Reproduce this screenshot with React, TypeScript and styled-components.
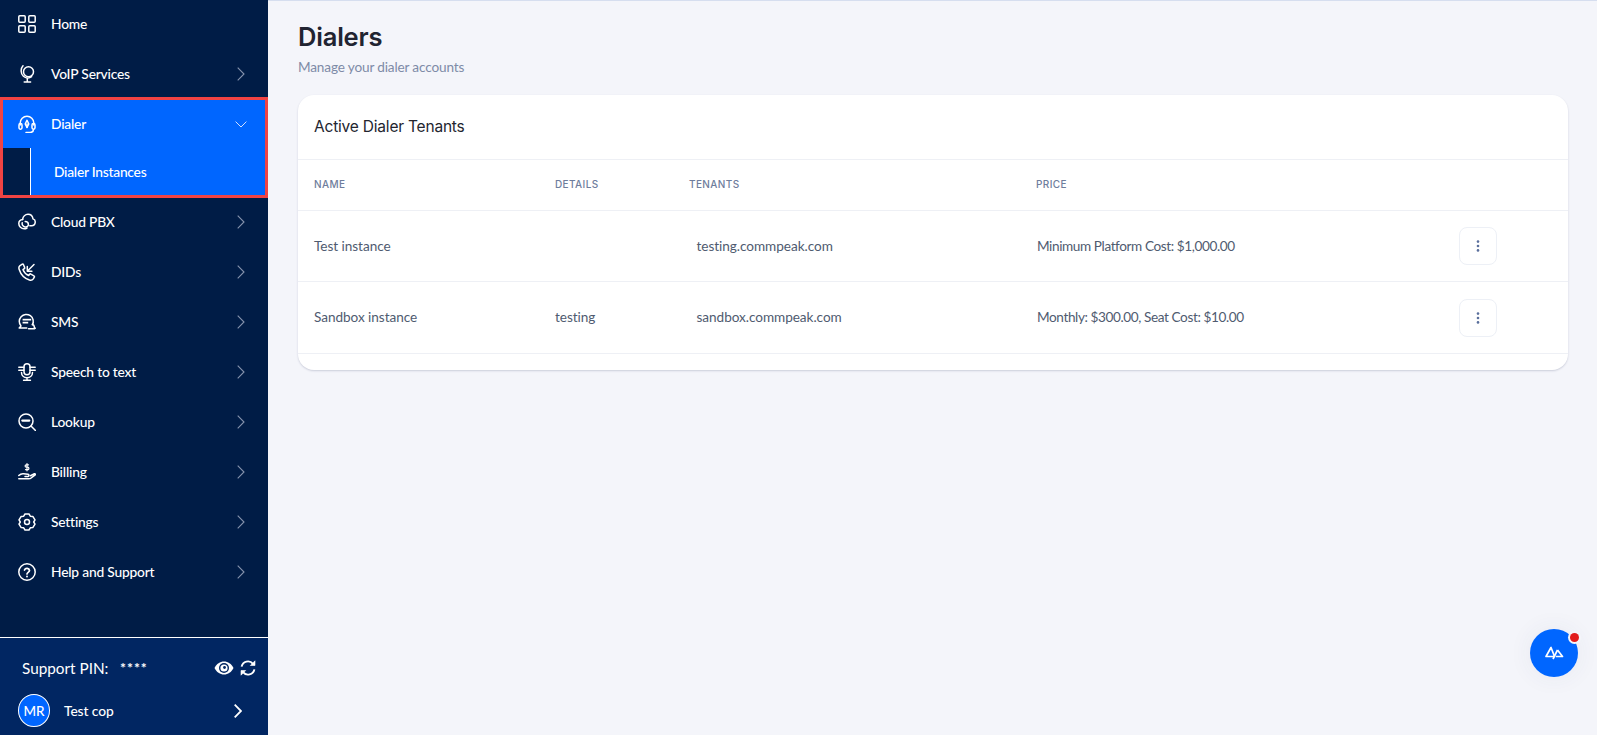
import React, { FC, ReactNode } from 'react';
import styled, { createGlobalStyle } from 'styled-components';

const GlobalStyle = createGlobalStyle`
  html, body {
    margin: 0;
    height: 100%;
    overflow: hidden;
    background: #f4f5fa;
    font-family: 'Lato', 'Noto Sans', sans-serif;
  }
  #root { height: 100%; }
  * { box-sizing: border-box; }
`;

const Page = styled.div`
  display: flex;
  width: 1597px;
  height: 735px;
`;

const Sidebar = styled.aside`
  width: 268px;
  flex-shrink: 0;
  display: flex;
  flex-direction: column;
  background: #001c46;
`;

const NavList = styled.nav`
  flex-grow: 1;
  margin-top: -1px;
`;

const NavRow = styled.div<{ $nested?: boolean }>`
  display: flex;
  align-items: center;
  height: ${ props => props.$nested ? '48px' : '50px' };
  padding: 0 ${ props => props.$nested ? '18px' : '23px' } 0 ${ props => props.$nested ? '15px' : '18px' };
  color: #fff;
`;

const IconSlot = styled.span`
  display: flex;
  width: 18px;
  height: 18px;
  margin-right: 15px;
`;

const NavLabel = styled.span`
  font-size: 13.8px;
  font-weight: 500;
  letter-spacing: -0.2px;
  padding-bottom: 2px;
  flex-grow: 1;
`;

const ArrowSlot = styled.span<{ $tone?: string }>`
  display: flex;
  color: ${ props => props.$tone || '#8593ad' };
`;

const ActiveGroup = styled.div`
  margin: -2px 0 -1px;
  height: 101px;
  border: 3px solid #f04343;
  background: #0066ff;
`;

const SubRow = styled.div`
  display: flex;
  height: 47px;
`;

const SubGutter = styled.div`
  width: 28px;
  background: #001c46;
  border-right: 1px solid #fff;
`;

const SubLabel = styled.span`
  margin-left: 23px;
  align-self: center;
  color: #fff;
  font-size: 13.8px;
  font-weight: 500;
  letter-spacing: -0.25px;
`;

const SidebarFooter = styled.div`
  height: 98px;
  border-top: 1px solid #fff;
  background: #012662;
  color: #fff;
  padding: 17px 12px 0 18px;
`;

const PinRow = styled.div`
  display: flex;
  align-items: center;
  height: 24px;
  padding-left: 4px;
  font-size: 15.3px;
`;

const PinLabel = styled.span`
  width: 98px;
  padding-top: 1px;
`;

const PinMask = styled.span`
  font-size: 14px;
  font-weight: 700;
  letter-spacing: 1px;
  flex-grow: 1;
`;

const PinIcons = styled.span`
  display: flex;
  align-items: center;
  gap: 6px;
  margin-top: 1px;
`;

const UserRow = styled.div`
  display: flex;
  align-items: center;
  margin-top: 15px;
  padding-right: 14px;
`;

const Avatar = styled.div`
  width: 32px;
  height: 33px;
  border-radius: 50%;
  border: 1px solid #fff;
  background: #0066ff;
  display: flex;
  align-items: center;
  justify-content: center;
  font-size: 13.5px;
  font-weight: 500;
`;

const UserName = styled.span`
  margin-left: 14px;
  font-size: 13.8px;
  font-weight: 500;
  letter-spacing: -0.1px;
  flex-grow: 1;
`;

const Main = styled.main`
  flex-grow: 1;
  border-top: 1px solid #d6deef;
  padding: 21px 29px 0 30px;
`;

const Title = styled.h1`
  margin: 0;
  font-family: 'Inter', sans-serif;
  font-size: 25.5px;
  line-height: 30px;
  font-weight: 600;
  letter-spacing: -0.2px;
  color: #212431;
`;

const Subtitle = styled.p`
  margin: 6px 0 0;
  font-size: 13.6px;
  line-height: 18px;
  letter-spacing: -0.15px;
  color: #7e8ba7;
`;

const Card = styled.section`
  margin-top: 19px;
  height: 275px;
  background: #fff;
  border-radius: 16px;
  box-shadow: 0 1px 2px rgba(60, 70, 110, 0.22);
`;

const CardHeader = styled.div`
  height: 65px;
  display: flex;
  align-items: center;
  padding-left: 16px;
  padding-bottom: 1px;
  font-family: 'Inter', sans-serif;
  font-size: 15.5px;
  letter-spacing: -0.2px;
  color: #23252f;
  border-bottom: 1px solid #eef0f5;
`;

const GridRow = styled.div<{ $height: number }>`
  display: grid;
  grid-template-columns: 241px 134px 347px 423px 38px;
  align-items: center;
  height: ${ props => props.$height }px;
  padding-left: 16px;
  border-bottom: 1px solid #eef0f5;
`;

const HeadCell = styled.span`
  font-family: 'Inter', sans-serif;
  font-size: 10px;
  font-weight: 500;
  letter-spacing: 0.4px;
  padding-bottom: 3px;
  color: #6e7d9c;
`;

const Cell = styled.span<{ $inset?: boolean }>`
  font-size: 13.6px;
  letter-spacing: -0.05px;
  padding-bottom: 1px;
  color: #4f5b70;
  padding-left: ${ props => props.$inset ? '7.5px' : '0' };
`;

const PriceCell = styled(Cell)`
  letter-spacing: -0.4px;
  padding-left: 1px;
`;

const MenuButton = styled.button`
  width: 38px;
  height: 38px;
  padding: 0;
  display: flex;
  align-items: center;
  justify-content: center;
  background: #fff;
  border: 1px solid #edf0f6;
  border-radius: 8px;
  color: #5a6f9c;
`;

const ChatBubble = styled.button`
  position: fixed;
  left: 1530px;
  top: 629px;
  width: 48px;
  height: 48px;
  padding: 0;
  border: 0;
  border-radius: 50%;
  background: #0066ff;
  display: flex;
  align-items: center;
  justify-content: center;
  box-shadow: 0 0 24px rgba(60, 70, 110, 0.07);
`;

const ChatDot = styled.span`
  position: absolute;
  top: 4px;
  right: -1px;
  width: 9px;
  height: 9px;
  border-radius: 50%;
  background: #e21b1b;
  box-shadow: 0 0 0 2px #f4f5fa;
`;

const Stroke: FC<{ children: ReactNode }> = ({ children }) => (
  <svg width='18' height='18' viewBox='0 0 18 18' fill='none' stroke='currentColor' strokeWidth='1.5' strokeLinecap='round' strokeLinejoin='round'>
    { children }
  </svg>
);

const HomeIcon = () => (
  <Stroke>
    <rect x='0.8' y='0.8' width='6.4' height='6.4' rx='1' />
    <rect x='10.8' y='0.8' width='6.4' height='6.4' rx='1' />
    <rect x='0.8' y='10.8' width='6.4' height='6.4' rx='1' />
    <rect x='10.8' y='10.8' width='6.4' height='6.4' rx='1' />
  </Stroke>
);

const GlobeIcon = () => (
  <Stroke>
    <circle cx='10.500' cy='6.800' r='5' />
    <path d='M5 .8C2.400 3.600 2.600 8.800 5.400 11.300c2.300 2 5.800 2.200 8.200.4' />
    <path d='M9.300 13.300v3.300M6.200 17h6.400' />
  </Stroke>
);

const HeadsetIcon = () => (
  <Stroke>
    <path d='M2.200 10V8a6.800 6.800 0 0 1 13.600 0v2' />
    <rect x='1' y='8.600' width='3' height='5.600' rx='1.400' />
    <rect x='14' y='8.600' width='3' height='5.600' rx='1.400' />
    <path d='M15.500 14.500c0 2-1.600 2.900-3.300 2.900H8' />
    <path d='M9 5.200 7.200 9 9 12.400 10.800 9z' />
    <path d='M9 9v3.400' />
  </Stroke>
);

const CloudIcon = () => (
  <Stroke>
    <path d='M4.600 6.400C5 3.400 7.300 1.200 10 1.200c2.600 0 4.600 2 5 4.700 1.500.5 2.400 2 2.200 3.500-.2 2-1.700 3.400-3.600 3.400h-1.800' />
    <path d='M4.800 6.400C2.200 6.600.8 8.400.8 10.500c0 3 2.500 5.300 5.400 5.300 1 0 2-.3 2.800-.8' />
    <path d='M4.200 9.700c-.5 2 .8 3.800 2.800 4.200 1.900.3 3.400-.8 3.400-2.500 0-1.800-1.500-3-3.200-3' />
  </Stroke>
);

const PhoneInIcon = () => (
  <Stroke>
    <path d='M4.300 1.200 2 2.600C.8 3.400.7 5 1.200 6.500c1.500 4.700 5.500 9 10.300 10.500 1.500.4 3 0 3.800-1.100l1-1.700c.3-.5.1-1.100-.4-1.400l-3-1.700c-.5-.3-1-.2-1.300.2l-.9 1.200c-2.500-1-4.700-3.300-5.700-5.800l1.300-1c.4-.3.5-.9.300-1.300L5.400 1.500c-.3-.5-.7-.5-1.100-.3z' />
    <path d='M16 1.500 9.500 8M9.300 3.600V8.200h4.600' />
  </Stroke>
);

const SmsIcon = () => (
  <Stroke>
    <path d='M14.400 11.800A7 7 0 1 0 3 13l-1.800 2h7.500' />
    <path d='M10.500 15.800h5.800l1-.6-1.100-1a2.700 2.700 0 0 0-1.800-3' />
    <rect x='4.600' y='5.800' width='8.600' height='1.700' fill='currentColor' stroke='none' />
    <rect x='4.600' y='8.800' width='5.600' height='1.700' fill='currentColor' stroke='none' />
  </Stroke>
);

const MicIcon = () => (
  <Stroke>
    <rect x='6' y='0.800' width='6' height='11' rx='3' />
    <path d='M3.500 9.500c0 3.200 2.400 5.200 5.500 5.200s5.500-2 5.500-5.200M9 14.700v2.600M5.600 17.300h6.800' />
    <path d='M.8 4.200H6M12 4.200h5.200M.8 7.200H6M12 7.200h5.200' />
  </Stroke>
);

const LookupIcon = () => (
  <Stroke>
    <circle cx='8' cy='8' r='7' />
    <path d='m13 13 4.500 4.500' />
    <path d='M4.300 7.600h7' strokeWidth='2.200' />
  </Stroke>
);

const BillingIcon = () => (
  <Stroke>
    <path d='M.8 15.800h9.700c1.200 0 2.200-.4 3-1.100l3.700-2.900c.5-.5-.1-1.300-.8-1l-4 1.900' />
    <path d='M.8 12.500c1.500-1.500 3-2 4.700-1.800l4.500.6c1.200.2 1.300 2 0 2.100H7' />
    <path d='M10.500 1.800H8.300a1 1 0 0 0 0 2.400h1.400a1 1 0 0 1 0 2.400H7.500M9 .6v7.200' strokeWidth='1.200' />
  </Stroke>
);

const GearIcon = () => (
  <Stroke>
    <path d='M7 1h4l1.300 2.200 2.500.2 2.200 3.500-1.300 2.100 1.300 2.100L14.800 14.600l-2.500.2L11 17H7l-1.300-2.200-2.500-.2L1 11.100l1.300-2.100L1 6.900l2.200-3.500 2.500-.2z' />
    <circle cx='9' cy='9' r='2.500' />
  </Stroke>
);

const HelpIcon = () => (
  <Stroke>
    <circle cx='9' cy='9' r='8.200' />
    <path d='M6.500 7a2.600 2.600 0 0 1 5 .5c0 1.700-2.500 2-2.500 3.500' strokeWidth='1.700' />
    <path d='M9 13.400v.1' strokeWidth='1.900' />
  </Stroke>
);

const ChevronRight: FC<{ heavy?: boolean }> = ({ heavy }) => (
  <svg width='8' height='14' viewBox='0 0 8 14' fill='none' stroke='currentColor' strokeWidth={ heavy ? 1.800 : 1.100 }>
    <path d='m.7.7 6.300 6.300L.7 13.300' />
  </svg>
);

const ChevronDown = () => (
  <svg width='12' height='7' viewBox='0 0 12 7' fill='none' stroke='currentColor' strokeWidth='1'>
    <path d='m.6.6 5.400 5.400L11.400.6' />
  </svg>
);

const EyeIcon = () => (
  <svg width='20' height='14' viewBox='0 0 20 14'>
    <path d='M.5 7C2.600 2.800 6 .5 10 .5s7.400 2.300 9.500 6.500c-2.100 4.200-5.500 6.500-9.500 6.500S2.600 11.200.5 7z' fill='#fff' />
    <circle cx='10' cy='7' r='5' fill='#012662' />
    <circle cx='10' cy='7' r='3.600' fill='#fff' />
    <circle cx='10.500' cy='6.500' r='1.400' fill='#012662' />
  </svg>
);

const RefreshIcon = () => (
  <svg width='16' height='16' viewBox='0 0 16 16' fill='none' stroke='currentColor' strokeWidth='1.900'>
    <path d='M1.600 6.600A6.500 6.500 0 0 1 13 3.800' />
    <path d='M14.400 9.400A6.500 6.500 0 0 1 3 12.200' />
    <path d='M15 .8v4.700h-4.700z' fill='currentColor' strokeWidth='.6' />
    <path d='M1 15.200v-4.700h4.700z' fill='currentColor' strokeWidth='.6' />
  </svg>
);

const Dots = () => (
  <svg width='4' height='12' viewBox='0 0 4 12' fill='currentColor'>
    <circle cx='2' cy='1.600' r='1.300' />
    <circle cx='2' cy='6' r='1.300' />
    <circle cx='2' cy='10.400' r='1.300' />
  </svg>
);

const PeaksIcon = () => (
  <svg width='19' height='14' viewBox='0 0 19 14' fill='none' stroke='#fff' strokeWidth='1.700' strokeLinejoin='round'>
    <path d='M6 1.500 1 10.500h8.500z' />
    <path d='M12.500 4 17.500 10.500h-6.500' />
    <path d='M12.500 4 8 13' />
  </svg>
);

const upperItems = [
  { label: 'Home', icon: <HomeIcon />, arrow: false },
  { label: 'VoIP Services', icon: <GlobeIcon />, arrow: true },
];

const lowerItems = [
  { label: 'Cloud PBX', icon: <CloudIcon /> },
  { label: 'DIDs', icon: <PhoneInIcon /> },
  { label: 'SMS', icon: <SmsIcon /> },
  { label: 'Speech to text', icon: <MicIcon /> },
  { label: 'Lookup', icon: <LookupIcon /> },
  { label: 'Billing', icon: <BillingIcon /> },
  { label: 'Settings', icon: <GearIcon /> },
  { label: 'Help and Support', icon: <HelpIcon /> },
];

const tenants = [
  { name: 'Test instance', details: '', host: 'testing.commpeak.com', price: 'Minimum Platform Cost: $1,000.00', height: 71 },
  { name: 'Sandbox instance', details: 'testing', host: 'sandbox.commpeak.com', price: 'Monthly: $300.00, Seat Cost: $10.00', height: 72 },
];

const App: FC = () => (
  <Page>
    <GlobalStyle />
    <Sidebar>
      <NavList>
        { upperItems.map(item => (
          <NavRow key={ item.label }>
            <IconSlot>{ item.icon }</IconSlot>
            <NavLabel>{ item.label }</NavLabel>
            { item.arrow && <ArrowSlot><ChevronRight /></ArrowSlot> }
          </NavRow>
        )) }
        <ActiveGroup>
          <NavRow $nested>
            <IconSlot><HeadsetIcon /></IconSlot>
            <NavLabel>Dialer</NavLabel>
            <ArrowSlot $tone='#cfe0ff'><ChevronDown /></ArrowSlot>
          </NavRow>
          <SubRow>
            <SubGutter />
            <SubLabel>Dialer Instances</SubLabel>
          </SubRow>
        </ActiveGroup>
        { lowerItems.map(item => (
          <NavRow key={ item.label }>
            <IconSlot>{ item.icon }</IconSlot>
            <NavLabel>{ item.label }</NavLabel>
            <ArrowSlot><ChevronRight /></ArrowSlot>
          </NavRow>
        )) }
      </NavList>
      <SidebarFooter>
        <PinRow>
          <PinLabel>Support PIN:</PinLabel>
          <PinMask>****</PinMask>
          <PinIcons><EyeIcon /><RefreshIcon /></PinIcons>
        </PinRow>
        <UserRow>
          <Avatar>MR</Avatar>
          <UserName>Test cop</UserName>
          <ArrowSlot $tone='#fff'><ChevronRight heavy /></ArrowSlot>
        </UserRow>
      </SidebarFooter>
    </Sidebar>
    <Main>
      <Title>Dialers</Title>
      <Subtitle>Manage your dialer accounts</Subtitle>
      <Card>
        <CardHeader>Active Dialer Tenants</CardHeader>
        <GridRow $height={ 51 }>
          <HeadCell>NAME</HeadCell>
          <HeadCell>DETAILS</HeadCell>
          <HeadCell>TENANTS</HeadCell>
          <HeadCell>PRICE</HeadCell>
        </GridRow>
        { tenants.map(t => (
          <GridRow key={ t.name } $height={ t.height }>
            <Cell>{ t.name }</Cell>
            <Cell>{ t.details }</Cell>
            <Cell $inset>{ t.host }</Cell>
            <PriceCell>{ t.price }</PriceCell>
            <MenuButton><Dots /></MenuButton>
          </GridRow>
        )) }
      </Card>
    </Main>
    <ChatBubble>
      <PeaksIcon />
      <ChatDot />
    </ChatBubble>
  </Page>
);

export default App;
